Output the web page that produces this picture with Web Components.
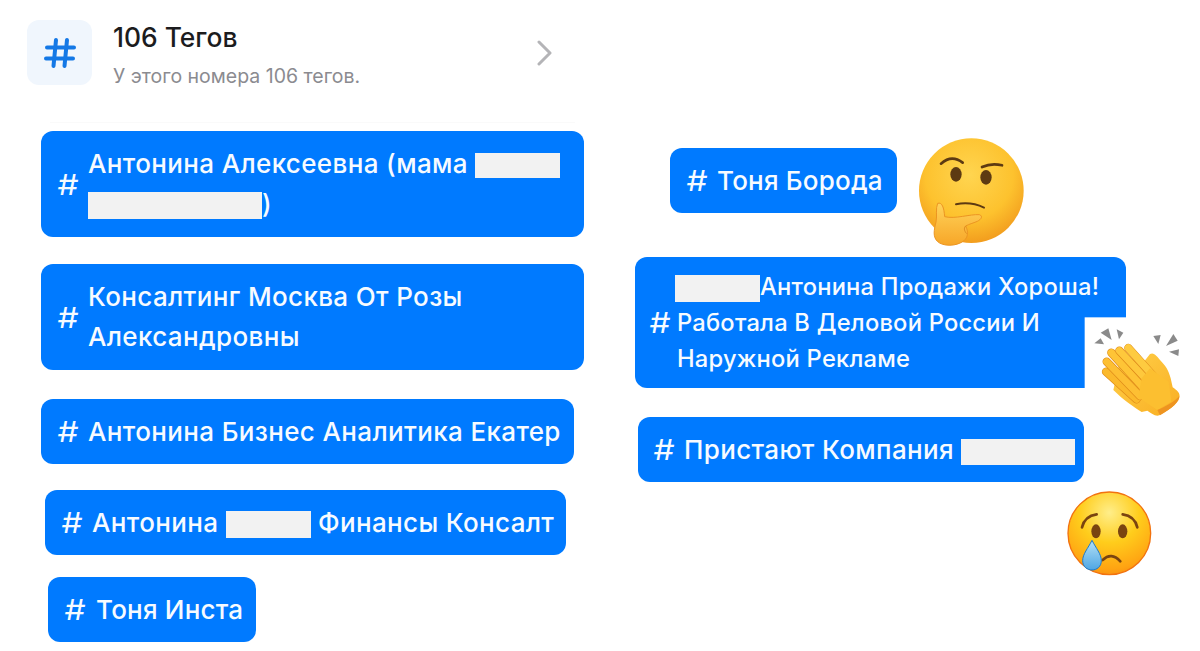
<!DOCTYPE html>
<html lang="ru">
<head>
<meta charset="utf-8">
<title>106 Тегов</title>
<style>
  html, body { margin: 0; padding: 0; background: #fff; }
  body { width: 1200px; height: 651px; overflow: hidden; position: relative; font-family: Inter, "Liberation Sans", sans-serif; }
</style>
</head>
<body>
<tag-board>
  <div slot="left">
    <tags-header></tags-header>
    <tag-chip w="543" x="41" top="0" gap="10" pad="17">Антонина Алексеевна (мама <hide-box w="85" h="25"></hide-box><br><hide-box w="174" h="27"></hide-box>)</tag-chip>
    <tag-chip w="543" x="41" top="27" gap="10" pad="17">Консалтинг Москва От Розы<br>Александровны</tag-chip>
    <tag-chip w="533" x="41" top="29" gap="10" pad="17" line="65">Антонина Бизнес Аналитика Екатер</tag-chip>
    <tag-chip w="521" x="45" top="26" gap="10" pad="17" line="65">Антонина <hide-box w="85" h="27"></hide-box> Финансы Консалт</tag-chip>
    <tag-chip w="208" x="48" top="22" gap="11" pad="17" line="65" ls="0.2">Тоня Инста</tag-chip>
  </div>
  <div slot="right">
    <tag-chip w="227" x="670" top="148" gap="10" pad="17" line="65" ls="0.2">Тоня Борода</tag-chip>
    <tag-chip w="491" x="635" top="44" gap="7" pad="15" line="36" size="23.7" ls="0.22">
      <hide-box w="85" h="27" style="margin-left:-2px"></hide-box>Антонина Продажи Хороша!<br>Работала В Деловой России И<br>Наружной Рекламе</tag-chip>
    <tag-chip w="446" x="638" top="29" gap="10" pad="16" line="65">Пристают Компания <hide-box w="114" h="26"></hide-box></tag-chip>
  </div>
</tag-board>

<emoji-thinking></emoji-thinking>
<emoji-clap></emoji-clap>
<emoji-cry></emoji-cry>

<script>
// two free columns, the tags hang off the left edge of the page
class TagBoard extends HTMLElement {
  constructor() {
    super();
    this.attachShadow({ mode: 'open' });
    this.shadowRoot.innerHTML = `
      <style>
        :host { display: flex; width: 1200px; height: 651px; }
        .col { display: flex; flex-direction: column; align-items: flex-start; }
        .left { width: 600px; }
      </style>
      <div class="col left"><slot name="left"></slot></div>
      <div class="col"><slot name="right"></slot></div>
    `;
  }
}

class TagsHeader extends HTMLElement {
  constructor() {
    super();
    this.attachShadow({ mode: 'open' });
    this.shadowRoot.innerHTML = `
      <style>
        :host { display: flex; box-sizing: border-box; width: 600px; height: 131px; padding: 20px 0 0 27px; color: #1c1c1e; position: relative; }
        .icon { width: 65px; height: 65px; border-radius: 12px; background: #f0f6fd; display: flex; align-items: center; justify-content: center; flex: none; }
        .text { margin-left: 21px; flex: none; width: 422px; }
        .title { font-size: 26.4px; font-weight: 500; line-height: 34px; }
        .sub { font-size: 19.5px; line-height: 24px; color: #8b8b90; margin-top: 10px; }
        .chevron { flex: none; margin-top: 20px; }
        .line { position: absolute; left: 50px; right: 25px; top: 122px; height: 1px; background: #fafafa; }
      </style>
      <div class="icon">
        <svg width="32" height="32" viewBox="0 0 32 32" fill="none" stroke="#1478e6" stroke-width="4" stroke-linecap="round">
          <path d="M12 3 9.5 29M23 3 20.5 29M3 10.5H30M2 21.5H29"/>
        </svg>
      </div>
      <div class="text">
        <div class="title">106 Тегов</div>
        <div class="sub">У этого номера 106 тегов.</div>
      </div>
      <svg class="chevron" width="18" height="26" viewBox="0 0 18 26" fill="none" stroke="#b4b4b7" stroke-width="3" stroke-linecap="round" stroke-linejoin="round">
        <path d="M4 2 15 13 4 24"/>
      </svg>
      <div class="line"></div>
    `;
  }
}

class TagChip extends HTMLElement {
  constructor() {
    super();
    this.attachShadow({ mode: 'open' });
  }

  connectedCallback() {
    const attr = (name, fallback) => this.getAttribute(name) || fallback;
    const line = Number(attr('line', 40));
    const padY = line === 40 ? 13 : line === 36 ? 11.5 : 0;
    this.shadowRoot.innerHTML = `
      <style>
        :host {
          display: flex; align-items: center; box-sizing: border-box;
          width: ${attr('w', 300)}px;
          margin: ${attr('top', 0)}px 0 0 ${attr('x', 0) - (this.closest('[slot=right]') ? 600 : 0)}px;
          padding: ${padY}px 0 ${padY}px ${attr('pad', 17)}px;
          min-height: 65px;
          background: #007aff;
          border-radius: 12px;
          color: #f7fbff;
          font-size: ${attr('size', 26)}px;
          font-weight: 500;
          letter-spacing: ${attr('ls', 0.36)}px;
          white-space: nowrap;
        }
        .hash { flex: none; width: 20px; margin-right: ${attr('gap', 10)}px; font-size: 29px; font-weight: 400; letter-spacing: 0; text-align: center; transform: scaleX(1.15); }
        .body { line-height: ${line}px; }
      </style>
      <span class="hash">#</span>
      <span class="body"><slot></slot></span>
    `;
  }
}

class HideBox extends HTMLElement {
  constructor() {
    super();
    this.attachShadow({ mode: 'open' });
  }

  connectedCallback() {
    this.shadowRoot.innerHTML = `
      <style>
        :host {
          display: inline-block; vertical-align: middle; background: #f2f2f2;
          width: ${this.getAttribute('w')}px; height: ${this.getAttribute('h')}px;
        }
      </style>
    `;
  }
}

class EmojiThinking extends HTMLElement {
  constructor() {
    super();
    this.attachShadow({ mode: 'open' });
    this.shadowRoot.innerHTML = `
      <style>:host { position: absolute; left: 900px; top: 120px; width: 140px; height: 140px; display: block; } svg { display: block; }</style>
      <svg width="140" height="140" viewBox="0 0 420 420">
        <defs>
          <radialGradient id="tf" cx="48%" cy="35%" r="70%">
            <stop offset="0" stop-color="#ffd550"/><stop offset="0.6" stop-color="#fdc22e"/><stop offset="1" stop-color="#f0951a"/>
          </radialGradient>
          <linearGradient id="th" x1="0" y1="0" x2="0" y2="1">
            <stop offset="0" stop-color="#ffd35a"/><stop offset="1" stop-color="#f7a628"/>
          </linearGradient>
        </defs>
        <circle cx="214" cy="212" r="157" fill="url(#tf)"/>
        <path d="M123 131Q155 102 188 128" fill="none" stroke="#5d3a12" stroke-width="8" stroke-linecap="round"/>
        <path d="M246 141Q275 128 306 136" fill="none" stroke="#5d3a12" stroke-width="8" stroke-linecap="round"/>
        <ellipse cx="168" cy="163" rx="17" ry="22" fill="#5d3a12"/>
        <ellipse cx="258" cy="172" rx="17" ry="22" fill="#5d3a12"/>
        <path d="M168 253Q212 244 252 263" fill="none" stroke="#5d3a12" stroke-width="6" stroke-linecap="round"/>
        <path d="M113 250C126 246 132 262 134 290C165 298 210 282 238 284C250 288 244 298 232 304C218 310 208 312 197 318C206 335 204 352 192 362C170 380 128 380 112 364C98 350 102 330 108 306C112 286 106 266 113 250Z" fill="url(#th)" stroke="#ec9522" stroke-width="3"/>
        <path d="M197 318C188 326 196 336 199 340" fill="none" stroke="#d8841c" stroke-width="2.5" stroke-linecap="round"/>
      </svg>
    `;
  }
}

class EmojiClap extends HTMLElement {
  constructor() {
    super();
    this.attachShadow({ mode: 'open' });
    this.shadowRoot.innerHTML = `
      <style>:host { position: absolute; left: 1070px; top: 310px; width: 130px; height: 120px; display: block; } svg { display: block; }</style>
      <svg width="130" height="120" viewBox="0 0 390 360">
        <defs>
          <linearGradient id="cl" x1="0" y1="0" x2="1" y2="1">
            <stop offset="0" stop-color="#ffd04a"/><stop offset="1" stop-color="#f9ae22"/>
          </linearGradient>
        </defs>
        <rect x="44" y="22" width="346" height="338" fill="#fff"/>
        <g fill="#8a8a8a">
          <path d="M92 68 115 55 125 90Z"/><path d="M140 58 160 68 147 88Z"/><path d="M73 100 92 85 102 103Z"/>
          <path d="M250 78 272 75 265 102Z"/><path d="M288 108 310 72 323 92Z"/><path d="M297 125 327 118 325 138Z"/>
        </g>
        <!-- palm and thumb -->
        <path d="M240 132C252 125 262 140 272 152C285 165 296 180 302 205L308 232C320 240 332 250 328 262C322 285 295 300 268 316C255 320 245 310 232 302L215 306C190 290 160 270 130 240L150 150 210 170Z" fill="url(#cl)"/>
        <!-- fingers: dark outline first, then the fill -->
        <g stroke-linecap="round" fill="none">
          <path d="M108 185 200 268" stroke="#e08c1a" stroke-width="25"/>
          <path d="M108 185 200 268" stroke="#fbb92c" stroke-width="21"/>
          <path d="M110 155 210 258" stroke="#e08c1a" stroke-width="25"/>
          <path d="M110 155 210 258" stroke="#fdbf33" stroke-width="21"/>
          <path d="M124 128 222 236" stroke="#e08c1a" stroke-width="25"/>
          <path d="M124 128 222 236" stroke="#fec436" stroke-width="21"/>
          <path d="M148 122 238 218" stroke="#e08c1a" stroke-width="25"/>
          <path d="M148 122 238 218" stroke="#fec83c" stroke-width="21"/>
          <path d="M175 114 252 200" stroke="#e08c1a" stroke-width="25"/>
          <path d="M175 114 252 200" stroke="#fecb40" stroke-width="22"/>
        </g>
        <path d="M215 205 240 175 296 215 304 275 262 300 205 262Z" fill="#fcbf30"/>
        <path d="M262 300C285 290 315 275 328 258C330 275 305 295 270 316Z" fill="#ee9420"/>
      </svg>
    `;
  }
}

class EmojiCry extends HTMLElement {
  constructor() {
    super();
    this.attachShadow({ mode: 'open' });
    this.shadowRoot.innerHTML = `
      <style>:host { position: absolute; left: 1050px; top: 480px; width: 120px; height: 110px; display: block; } svg { display: block; }</style>
      <svg width="120" height="110" viewBox="0 0 360 330">
        <defs>
          <radialGradient id="cf" cx="50%" cy="25%" r="80%">
            <stop offset="0" stop-color="#ffee8a"/><stop offset="0.45" stop-color="#ffcd1c"/><stop offset="0.85" stop-color="#ffa412"/><stop offset="1" stop-color="#f98a10"/>
          </radialGradient>
          <linearGradient id="ct" x1="0" y1="0" x2="0" y2="1">
            <stop offset="0" stop-color="#b4e0f6"/><stop offset="1" stop-color="#4ea6e4"/>
          </linearGradient>
        </defs>
        <circle cx="178" cy="160" r="124" fill="url(#cf)" stroke="#f2720f" stroke-width="4"/>
        <path d="M96 142Q104 108 140 103" fill="none" stroke="#7a4410" stroke-width="8" stroke-linecap="round"/>
        <path d="M262 142Q254 108 218 103" fill="none" stroke="#7a4410" stroke-width="8" stroke-linecap="round"/>
        <ellipse cx="138" cy="154" rx="14" ry="21" fill="#7a4410"/>
        <ellipse cx="218" cy="154" rx="14" ry="21" fill="#7a4410"/>
        <path d="M158 240Q184 215 211 244" fill="none" stroke="#7a4410" stroke-width="8" stroke-linecap="round"/>
        <path d="M126 181C138 205 154 222 154 242C154 260 140 270 126 270C112 270 98 260 98 242C98 222 114 205 126 181Z" fill="url(#ct)" stroke="#1d79c9" stroke-width="3"/>
      </svg>
    `;
  }
}

customElements.define('tag-board', TagBoard);
customElements.define('tags-header', TagsHeader);
customElements.define('tag-chip', TagChip);
customElements.define('hide-box', HideBox);
customElements.define('emoji-thinking', EmojiThinking);
customElements.define('emoji-clap', EmojiClap);
customElements.define('emoji-cry', EmojiCry);
</script>
</body>
</html>
